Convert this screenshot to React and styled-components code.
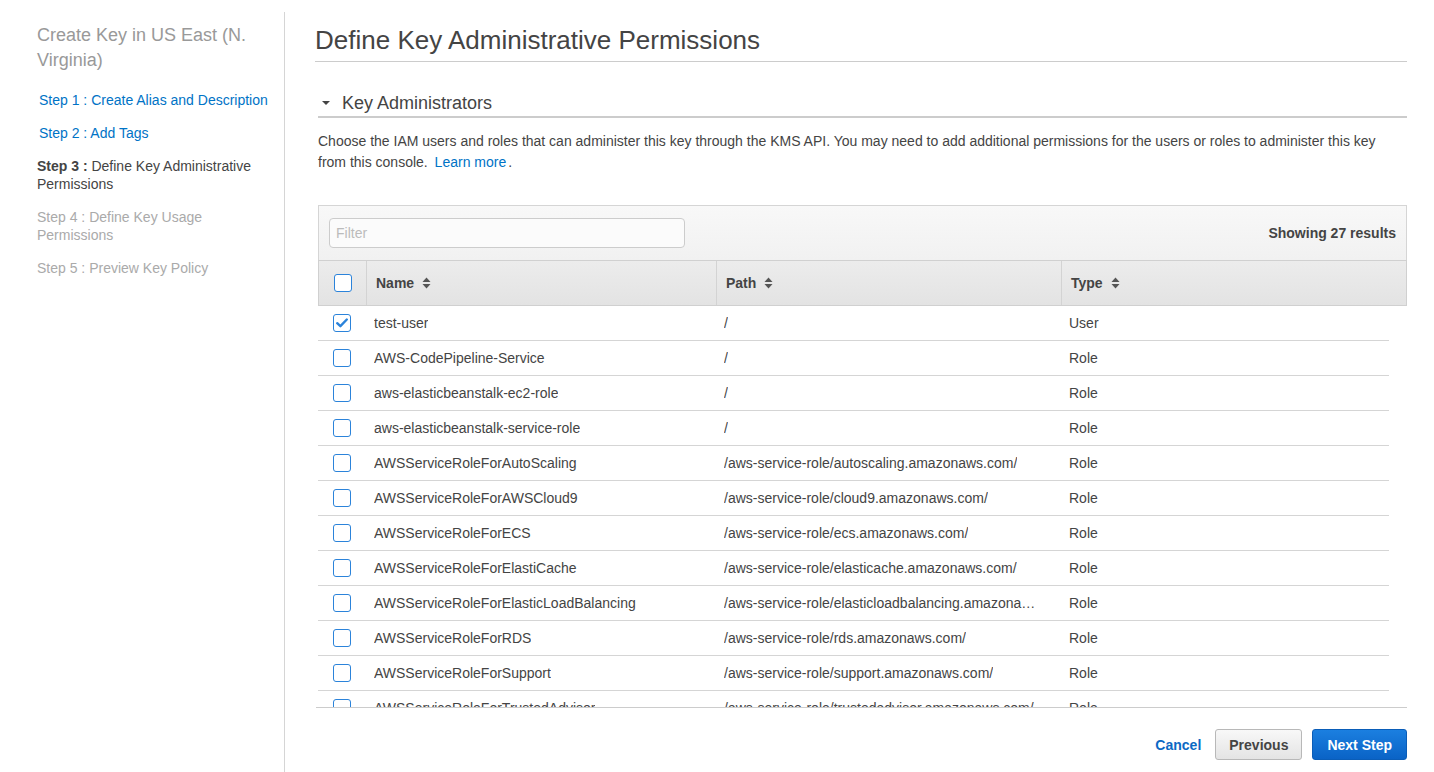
import React from "react";
import styled, { createGlobalStyle } from "styled-components";

const Global = createGlobalStyle`
  html, body { margin: 0; padding: 0; background: #fff; }
  body { font-family: "Liberation Sans", Arial, Helvetica, sans-serif; color: #444; }
  * { box-sizing: border-box; }
`;

const Page = styled.div`
  display: flex;
  height: 772px;
  overflow: hidden;
`;

const Sidebar = styled.nav`
  flex: 0 0 285px;
  margin-top: 12px;
  padding: 11px 8px 0 37px;
  border-right: 1px solid #d5d5d5;
`;

const SideTitle = styled.div`
  font-size: 18px;
  line-height: 25px;
  color: #999;
  margin-bottom: 18px;
`;

const StepItem = styled.div`
  font-size: 14px;
  line-height: 18px;
  margin-bottom: 15px;
  padding-left: ${(p) => (p.$state === "done" ? "2px" : "0")};
  color: ${(p) =>
    p.$state === "done" ? "#0073c6" : p.$state === "current" ? "#444" : "#aaa"};
  b { font-weight: bold; }
`;

const Main = styled.main`
  flex: 1;
  padding: 0 27px 0 30px;
  display: flex;
  flex-direction: column;
`;

const Title = styled.h1`
  margin: 0;
  padding-top: 24px;
  font-size: 26px;
  line-height: 32px;
  font-weight: normal;
  color: #444;
  padding-bottom: 5px;
  border-bottom: 1px solid #ccc;
`;

const Section = styled.section`
  padding-left: 3px;
  display: flex;
  flex-direction: column;
`;

const SectionHead = styled.h2`
  margin: 30px 0 0;
  font-size: 18px;
  line-height: 22px;
  font-weight: normal;
  color: #444;
  display: flex;
  align-items: center;
  gap: 12px;
  padding-left: 4px;
  padding-bottom: 2px;
  border-bottom: 2px solid #ccc;
`;

const Caret = styled.span`
  width: 0;
  height: 0;
  border-left: 4px solid transparent;
  border-right: 4px solid transparent;
  border-top: 4px solid #444;
`;

const Desc = styled.p`
  margin: 13px 0 0;
  font-size: 14px;
  line-height: 21px;
  color: #444;
  a { color: #0073c6; text-decoration: none; margin: 0 2px 0 3px; }
`;

const Table = styled.div`
  margin-top: 32px;
  display: flex;
  flex-direction: column;
`;

const Toolbar = styled.div`
  height: 55px;
  border: 1px solid #d5d5d5;
  border-bottom: none;
  background: linear-gradient(#f8f8f8, #f1f1f1);
  display: flex;
  align-items: center;
  justify-content: space-between;
  padding: 0 10px 0 10px;
`;

const FilterInput = styled.input`
  width: 356px;
  height: 30px;
  border: 1px solid #ccc;
  border-radius: 4px;
  background: #fbfbfb;
  font-family: inherit;
  font-size: 14px;
  padding: 0 6px;
  color: #444;
  outline: none;
  &::placeholder { color: #bbb; }
`;

const Count = styled.span`
  font-size: 14px;
  font-weight: bold;
  color: #444;
`;

const cols = "47px 350px 345px 1fr";

const HeadRow = styled.div`
  display: grid;
  grid-template-columns: ${cols};
  height: 46px;
  border: 1px solid #d0d0d0;
  background: linear-gradient(#ececec, #e3e3e3);
`;

const HeadCell = styled.div`
  display: flex;
  align-items: center;
  justify-content: ${(p) => (p.$center ? "center" : "flex-start")};
  gap: 8px;
  padding-left: ${(p) => (p.$center ? "0" : "9px")};
  font-size: 14px;
  font-weight: bold;
  color: #444;
  border-left: ${(p) => (p.$first ? "none" : "1px solid #d3d3d3")};
`;

const SortIcon = () => (
  <svg width="9" height="12" viewBox="0 0 9 12">
    <path d="M4.5 0.5 L8.5 5 H0.5 Z" fill="#555" />
    <path d="M4.5 11.5 L8.5 7 H0.5 Z" fill="#555" />
  </svg>
);

const Body = styled.div`
  height: 402px;
  overflow: hidden;
  padding-right: 18px;
  border-bottom: 1px solid #ccc;
  margin-left: -2px;
  padding-left: 2px;
`;

const Row = styled.div`
  display: grid;
  grid-template-columns: ${cols};
  height: 35px;
  border-bottom: 1px solid #d5d5d5;
`;

const Cell = styled.div`
  display: flex;
  align-items: center;
  justify-content: ${(p) => (p.$center ? "center" : "flex-start")};
  padding: 0 ${(p) => (p.$center ? "0" : "16px")} 0 ${(p) => (p.$center ? "0" : "9px")};
  font-size: 14px;
  color: #444;
  min-width: 0;
  span {
    white-space: nowrap;
    overflow: hidden;
    text-overflow: ellipsis;
  }
`;

const Box = styled.span`
  width: 18px;
  height: 18px;
  border: 1.5px solid #2b83da;
  border-radius: 3px;
  background: #fff;
  display: inline-flex;
  align-items: center;
  justify-content: center;
`;

const Checkbox = ({ checked }) => (
  <Box>
    {checked && (
      <svg width="12" height="10" viewBox="0 0 12 10">
        <path d="M1.2 5.2 L4.4 8.2 L10.8 1.5" fill="none" stroke="#2b83da" strokeWidth="2.4" strokeLinecap="round" strokeLinejoin="round" />
      </svg>
    )}
  </Box>
);

const Footer = styled.div`
  display: flex;
  justify-content: flex-end;
  align-items: center;
  margin-top: 21px;
  gap: 10px;
`;

const CancelLink = styled.a`
  font-size: 14px;
  font-weight: bold;
  color: #0b69c4;
  margin-right: 4px;
  cursor: pointer;
`;

const Button = styled.button`
  height: 31px;
  padding: 0 ${(p) => (p.$primary ? "14px" : "13px")};
  border-radius: 3px;
  font-family: inherit;
  font-size: 14px;
  font-weight: bold;
  cursor: pointer;
  color: ${(p) => (p.$primary ? "#fff" : "#444")};
  border: 1px solid ${(p) => (p.$primary ? "#0a5db8" : "#b8b8b8")};
  background: ${(p) =>
    p.$primary
      ? "linear-gradient(#1b7fe0, #0a63c6)"
      : "linear-gradient(#f8f8f8, #e4e4e4)"};
`;

const rows = [
  ["test-user", "/", "User", true],
  ["AWS-CodePipeline-Service", "/", "Role"],
  ["aws-elasticbeanstalk-ec2-role", "/", "Role"],
  ["aws-elasticbeanstalk-service-role", "/", "Role"],
  ["AWSServiceRoleForAutoScaling", "/aws-service-role/autoscaling.amazonaws.com/", "Role"],
  ["AWSServiceRoleForAWSCloud9", "/aws-service-role/cloud9.amazonaws.com/", "Role"],
  ["AWSServiceRoleForECS", "/aws-service-role/ecs.amazonaws.com/", "Role"],
  ["AWSServiceRoleForElastiCache", "/aws-service-role/elasticache.amazonaws.com/", "Role"],
  ["AWSServiceRoleForElasticLoadBalancing", "/aws-service-role/elasticloadbalancing.amazonaws.com/", "Role"],
  ["AWSServiceRoleForRDS", "/aws-service-role/rds.amazonaws.com/", "Role"],
  ["AWSServiceRoleForSupport", "/aws-service-role/support.amazonaws.com/", "Role"],
  ["AWSServiceRoleForTrustedAdvisor", "/aws-service-role/trustedadvisor.amazonaws.com/", "Role"],
  ["CodeBuildServiceRole", "/service-role/", "Role"],
  ["ecsInstanceRole", "/", "Role"],
];

export default function App() {
  return (
    <>
      <Global />
      <Page>
        <Sidebar>
          <SideTitle>Create Key in US East (N. Virginia)</SideTitle>
          <StepItem $state="done">Step 1 : Create Alias and Description</StepItem>
          <StepItem $state="done">Step 2 : Add Tags</StepItem>
          <StepItem $state="current"><b>Step 3 :</b> Define Key Administrative Permissions</StepItem>
          <StepItem $state="todo">Step 4 : Define Key Usage Permissions</StepItem>
          <StepItem $state="todo">Step 5 : Preview Key Policy</StepItem>
        </Sidebar>
        <Main>
          <Title>Define Key Administrative Permissions</Title>
          <Section>
            <SectionHead><Caret />Key Administrators</SectionHead>
            <Desc>
              Choose the IAM users and roles that can administer this key through the KMS API. You may need to add additional permissions for the users or roles to administer this key from this console. <a href="#">Learn more</a>.
            </Desc>
            <Table>
              <Toolbar>
                <FilterInput placeholder="Filter" />
                <Count>Showing 27 results</Count>
              </Toolbar>
              <HeadRow>
                <HeadCell $center $first><Checkbox /></HeadCell>
                <HeadCell>Name <SortIcon /></HeadCell>
                <HeadCell>Path <SortIcon /></HeadCell>
                <HeadCell>Type <SortIcon /></HeadCell>
              </HeadRow>
              <Body>
                {rows.map(([name, path, type, checked]) => (
                  <Row key={name}>
                    <Cell $center><Checkbox checked={checked} /></Cell>
                    <Cell><span>{name}</span></Cell>
                    <Cell><span>{path}</span></Cell>
                    <Cell><span>{type}</span></Cell>
                  </Row>
                ))}
              </Body>
            </Table>
            <Footer>
              <CancelLink>Cancel</CancelLink>
              <Button>Previous</Button>
              <Button $primary>Next Step</Button>
            </Footer>
          </Section>
        </Main>
      </Page>
    </>
  );
}
